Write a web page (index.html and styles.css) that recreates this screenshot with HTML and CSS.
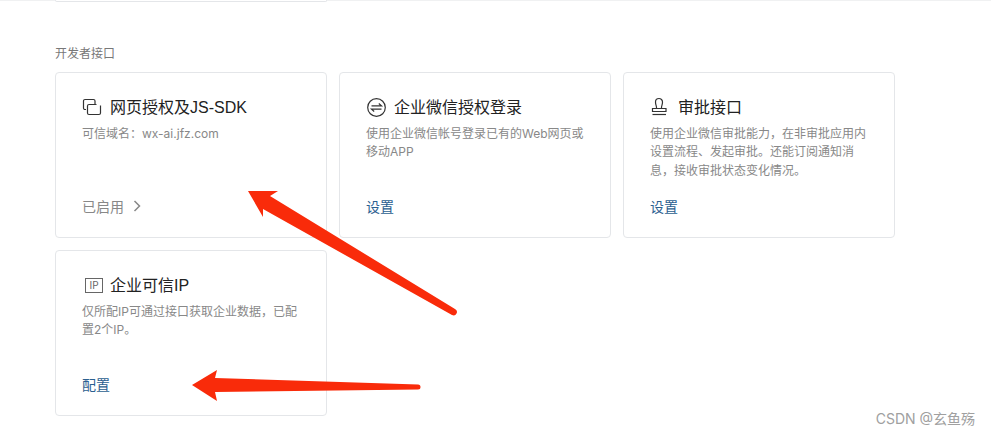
FILE: index.html
```html
<!DOCTYPE html>
<html lang="zh-CN">
<head>
  <meta charset="UTF-8">
  <meta name="viewport" content="width=device-width, initial-scale=1.0">
  <title>开发者接口</title>
  <link rel="stylesheet" href="styles.css">
</head>
<body>
  <div class="top-strip">
    <div class="top-card"></div>
  </div>

  <h2 class="section-title">开发者接口</h2>

  <div class="api-grid">
    <div class="api-card">
      <div class="api-head">
        <svg class="api-icon" viewBox="0 0 20 20">
          <path d="M4 12.500H3A1.500 1.500 0 0 1 1.500 11V4A1.500 1.500 0 0 1 3 2.500H11.500A1.500 1.500 0 0 1 13 4V7.500"/>
          <path d="M14.500 7.500H7A1.500 1.500 0 0 0 5.500 9V16A1.500 1.500 0 0 0 7 17.500H16"/>
          <path d="M18.500 8.500V16A1.500 1.500 0 0 1 17 17.500H16"/>
        </svg>
        <h3>网页授权及JS-SDK</h3>
      </div>
      <p class="api-desc">可信域名：wx-ai.jfz.com</p>
      <div class="api-action muted">已启用
        <svg class="chevron" viewBox="0 0 8 12"><path d="M1.500 1L6.500 6L1.500 11"/></svg>
      </div>
    </div>

    <div class="api-card">
      <div class="api-head">
        <svg class="api-icon" viewBox="0 0 20 20">
          <circle cx="10.500" cy="10.500" r="8.800"/>
          <path d="M5.500 8.800H15.500L12.800 6.500"/>
          <path d="M15.500 12.200H5.500L8.200 14.500"/>
        </svg>
        <h3>企业微信授权登录</h3>
      </div>
      <p class="api-desc">使用企业微信帐号登录已有的Web网页或移动APP</p>
      <a class="api-action" href="#">设置</a>
    </div>

    <div class="api-card">
      <div class="api-head">
        <svg class="api-icon" viewBox="0 0 20 20">
          <path d="M6.500 11.500V10.500C6.500 8.500 5.500 8 5.500 5A3.500 3.500 0 0 1 12.500 5C12.500 8 11.500 8.500 11.500 10.500V11.500"/>
          <path d="M2.500 11.500H16V14.500H2.500Z"/>
          <path d="M2.500 17.500H16"/>
        </svg>
        <h3>审批接口</h3>
      </div>
      <p class="api-desc">使用企业微信审批能力，在非审批应用内设置流程、发起审批。还能订阅通知消息，接收审批状态变化情况。</p>
      <a class="api-action" href="#">设置</a>
    </div>

    <div class="api-card">
      <div class="api-head">
        <span class="ip-icon">IP</span>
        <h3>企业可信IP</h3>
      </div>
      <p class="api-desc">仅所配IP可通过接口获取企业数据，已配置2个IP。</p>
      <a class="api-action" href="#">配置</a>
    </div>
  </div>

  <!-- red arrows drawn over the screenshot -->
  <svg class="arrows" viewBox="0 0 991 436">
    <path d="M248 191L278 191L270 196L455 309A2.500 2.500 0 0 1 452 315L263 209L263 217Z"/>
    <path d="M192 385L217 370L215 378L418 384.500A2.500 2.500 0 0 1 418 389.500L215 392L217 401Z"/>
  </svg>

  <div class="watermark">CSDN @玄鱼殇</div>
</body>
</html>
```

FILE: styles.css
```css
/* Reset and Global Styles */
* {
  margin: 0;
  padding: 0;
  box-sizing: border-box;
}

body {
  font-family: "Inter", "Noto Sans CJK SC", sans-serif;
  background: #ffffff;
  color: #222222;
  height: 436px;
  overflow: hidden;
  position: relative;
}

/* Cut off card at the top */
.top-strip {
  height: 1px;
  border-bottom: 1px solid #f0f1f2;
  padding-left: 55px;
}

.top-card {
  width: 272px;
  height: 2px;
  border: 1px solid #e4e6e9;
  border-top: none;
  border-radius: 0 0 4px 4px;
  background: #ffffff;
}

/* Section */
.section-title {
  font-size: 12px;
  font-weight: normal;
  line-height: 18px;
  color: #787878;
  margin: 44px 0 9px 55px;
}

.api-grid {
  display: grid;
  grid-template-columns: repeat(3, 272px);
  grid-auto-rows: 166px;
  gap: 12px;
  padding-left: 55px;
}

/* Cards */
.api-card {
  display: flex;
  flex-direction: column;
  border: 1px solid #e4e6e9;
  border-radius: 4px;
  padding: 23px 26px 20px;
}

.api-head {
  display: flex;
  align-items: center;
  height: 22px;
}

.api-head h3 {
  font-family: "Liberation Sans", "Noto Sans CJK SC", sans-serif;
  font-size: 16px;
  font-weight: normal;
  line-height: 22px;
  padding-top: 2px;
  color: #222222;
}

.api-icon {
  width: 20px;
  height: 20px;
  margin-right: 8px;
  flex-shrink: 0;
  fill: none;
  stroke: #333333;
  stroke-width: 1.200;
}

.ip-icon {
  width: 18px;
  height: 15px;
  margin: 0 7px 0 3px;
  border: 1px solid #666666;
  font-size: 10px;
  line-height: 13px;
  text-align: center;
  color: #666666;
  flex-shrink: 0;
}

.api-desc {
  font-size: 12px;
  line-height: 18.500px;
  color: #888888;
  margin-top: 6.500px;
}

.api-action {
  display: block;
  margin-top: auto;
  font-size: 14px;
  line-height: 20px;
  color: #2b6090;
  text-decoration: none;
}

.api-action.muted {
  color: #888888;
}

.chevron {
  width: 8px;
  height: 12px;
  margin-left: 5px;
  fill: none;
  stroke: #888888;
  stroke-width: 1.500;
}

/* Overlays */
.arrows {
  position: absolute;
  top: 0;
  left: 0;
  width: 991px;
  height: 436px;
  fill: #f92b0a;
}

.watermark {
  position: absolute;
  right: 16px;
  top: 410px;
  font-size: 14px;
  line-height: 18px;
  color: #a0a0a0;
}
```
